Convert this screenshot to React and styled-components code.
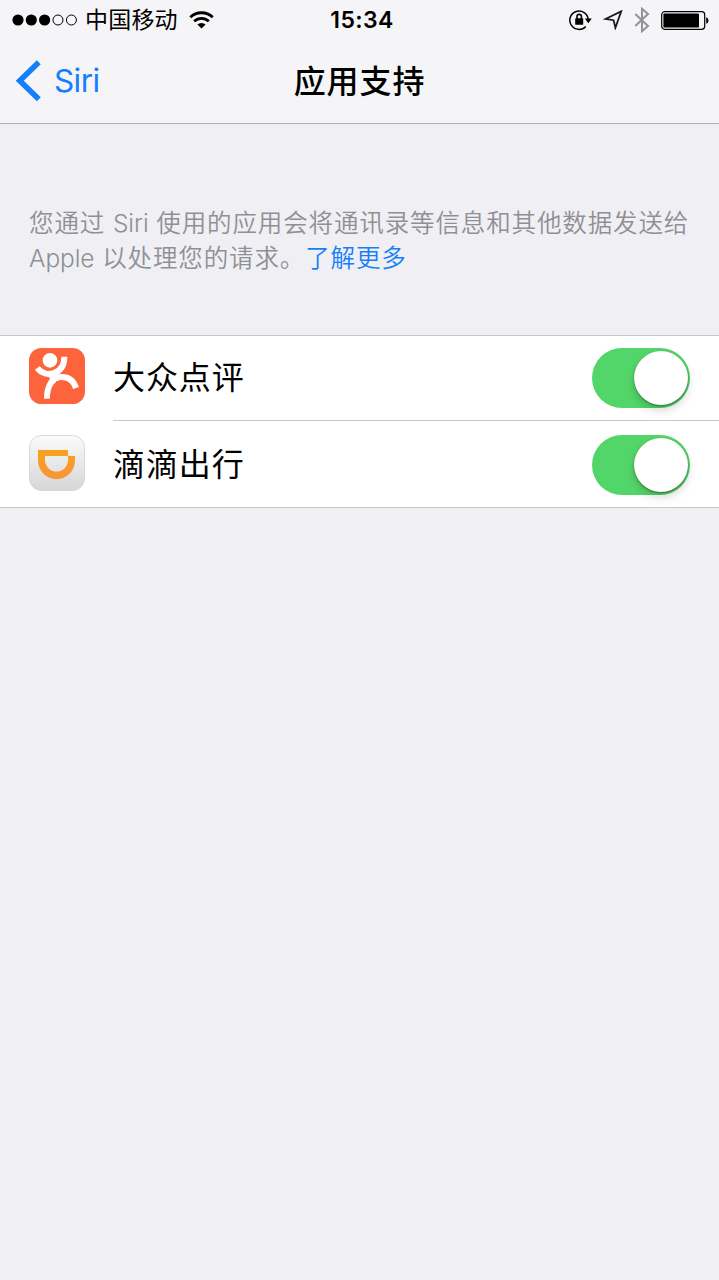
import React, { useState } from "react";
import styled, { createGlobalStyle } from "styled-components";

const GlobalStyle = createGlobalStyle`
  * {
    box-sizing: border-box;
  }
  body {
    margin: 0;
    background-color: #efeff4;
    font-family: Inter, "Noto Sans CJK SC", sans-serif;
    color: #000;
  }
`;

const Screen = styled.div`
  display: flex;
  flex-direction: column;
  width: 719px;
  height: 1280px;
  overflow: hidden;
  background-color: #efeff4;
`;

const Header = styled.header`
  height: 124px;
  background-color: #f5f5f8;
  border-bottom: 1px solid #aeaeb3;
`;

const StatusBar = styled.div`
  display: grid;
  grid-template-columns: 1fr auto 1fr;
  align-items: center;
  height: 40px;
  padding: 0 10px 0 12px;
`;

const StatusGroup = styled.div`
  display: flex;
  align-items: center;
  gap: ${({ $gap }) => $gap || 0}px;
  justify-content: ${({ $end }) => ($end ? "flex-end" : "flex-start")};
`;

const Carrier = styled.span`
  margin: 0 11px 0 7px;
  font-size: 23px;
  line-height: 40px;
  letter-spacing: 0.2px;
`;

const Clock = styled.span`
  padding-left: 3px;
  font-size: 23px;
  font-weight: 600;
  line-height: 40px;
  letter-spacing: 0.4px;
`;

const NavBar = styled.nav`
  display: grid;
  grid-template-columns: 1fr auto 1fr;
  align-items: center;
  height: 83px;
  padding: 0 16px;
`;

const BackButton = styled.button`
  display: flex;
  align-items: center;
  gap: 12px;
  margin-bottom: 2px;
  padding: 0;
  border: none;
  background: none;
  color: #157efb;
  font-family: inherit;
  font-size: 31.5px;
  line-height: 40px;
  letter-spacing: -0.6px;
  cursor: pointer;
`;

const Title = styled.h1`
  margin: 0;
  font-size: 32px;
  font-weight: 500;
  line-height: 40px;
  letter-spacing: 0.9px;
`;

const Note = styled.p`
  margin: 0;
  padding: 82px 20px 0 29px;
  height: 211px;
  font-size: 24.5px;
  font-weight: 350;
  line-height: 35px;
  letter-spacing: 0.88px;
  color: #8f8f95;
  white-space: nowrap;
`;

const Latin = styled.span`
  letter-spacing: -0.1px;
`;

const Link = styled.a`
  color: #157efb;
`;

const List = styled.div`
  border-top: 1px solid #c8c7cc;
  border-bottom: 1px solid #c8c7cc;
  background-color: #fff;
`;

const Row = styled.div`
  display: flex;
  align-items: stretch;
  gap: 28px;
  height: ${({ $last }) => ($last ? 86 : 85)}px;
  padding-left: 29px;
  & > svg {
    margin-top: ${({ $last }) => ($last ? 14 : 12)}px;
    flex-shrink: 0;
  }
`;

const RowBody = styled.div`
  display: flex;
  flex: 1;
  align-items: center;
  justify-content: space-between;
  padding-top: ${({ $last }) => ($last ? 2 : 0)}px;
  padding-right: 29px;
  border-bottom: ${({ $last }) => ($last ? "none" : "1px solid #c8c7cc")};
`;

const AppName = styled.span`
  font-size: 32px;
  line-height: 40px;
  letter-spacing: 0.9px;
`;

const Track = styled.button`
  display: flex;
  align-items: center;
  justify-content: ${({ $on }) => ($on ? "flex-end" : "flex-start")};
  width: 98px;
  height: 60px;
  padding: 0 2px;
  border: none;
  border-radius: 30px;
  background-color: ${({ $on }) => ($on ? "#53d669" : "#e5e5e5")};
  cursor: pointer;
`;

const Knob = styled.span`
  width: 54px;
  height: 54px;
  border-radius: 50%;
  background-color: #fff;
  box-shadow: 0 1px 2px rgba(0, 0, 0, 0.38), 0 5px 10px rgba(0, 0, 0, 0.17);
`;

const SignalDots = () => (
  <svg width="66" height="12" viewBox="0 0 66 12">
    <circle cx="6" cy="6" r="5.6" />
    <circle cx="19.3" cy="6" r="5.6" />
    <circle cx="32.6" cy="6" r="5.6" />
    <g fill="none" stroke="#000" strokeWidth="1">
      <circle cx="46" cy="6" r="5" />
      <circle cx="59.4" cy="6" r="5" />
    </g>
  </svg>
);

const WifiIcon = () => (
  <svg width="25" height="18" viewBox="0 0 25 18">
    <g fill="none" stroke="#000" strokeWidth="2.8">
      <path d="M1.3 6.3a16 16 0 0 1 22.4 0" />
      <path d="M5.2 10.3a10.4 10.4 0 0 1 14.6 0" />
    </g>
    <path d="M8.4 13.6a5.8 5.8 0 0 1 8.2 0L12.5 17.6z" />
  </svg>
);

const RotationLockIcon = () => (
  <svg width="24" height="22" viewBox="0 0 24 22">
    <path
      d="M17.8 17.4a9.2 9.2 0 1 1 2.4-6.8"
      fill="none"
      stroke="#000"
      strokeWidth="1.5"
    />
    <path d="M16.8 9.6h7l-3.5 4.6z" />
    <rect x="7.2" y="9.2" width="8" height="6.6" rx="0.6" />
    <path
      d="M9 10V7.6a2.2 2.2 0 0 1 4.4 0V10"
      fill="none"
      stroke="#000"
      strokeWidth="1.6"
    />
  </svg>
);

const LocationIcon = () => (
  <svg width="20" height="20" viewBox="0 0 20 20">
    <path
      d="M18.2 1.4L2.4 9l8.2 1.2 1.8 7.6z"
      fill="none"
      stroke="#1c1c1e"
      strokeWidth="1.8"
    />
  </svg>
);

const BluetoothIcon = () => (
  <svg width="16" height="26" viewBox="0 0 16 26">
    <path
      d="M1.3 7L14 19l-6 5.2V1.8L14 7 1.3 19"
      fill="none"
      stroke="#929295"
      strokeWidth="2"
    />
  </svg>
);

const BatteryIcon = () => (
  <svg width="48" height="19" viewBox="0 0 48 19">
    <rect
      x="0.7"
      y="0.7"
      width="43"
      height="17.6"
      rx="3"
      fill="none"
      stroke="#000"
      strokeWidth="1.2"
    />
    <rect x="2.4" y="2.4" width="35.6" height="14.2" rx="1.2" />
    <path d="M45.2 6.3c3 .8 3 5.6 0 6.4z" />
  </svg>
);

const ChevronIcon = () => (
  <svg width="26" height="42" viewBox="0 0 26 42">
    <path
      d="M22.8 2.3L3.8 20.8l19 18.5"
      fill="none"
      stroke="#157efb"
      strokeWidth="5.6"
    />
  </svg>
);

const DianpingIcon = () => (
  <svg width="56" height="56" viewBox="0 0 168 168">
    <rect width="168" height="168" rx="37" fill="#fd643b" />
    <circle cx="63" cy="37" r="22" fill="#fff" />
    <g fill="none" stroke="#fff" strokeWidth="18">
      <path d="M25 60C40 80 62 80 75 75 96 68 106 50 106 26" />
      <path d="M54 152C53 116 70 88 95 87 120 86 134 98 141 120" />
      <path d="M57 76C69 80 74 86 70 104" />
    </g>
  </svg>
);

const DidiIcon = () => (
  <svg width="56" height="56" viewBox="0 0 168 168">
    <defs>
      <linearGradient id="didiTile" x1="0" y1="0" x2="0" y2="1">
        <stop offset="0" stopColor="#fbfbfb" />
        <stop offset="1" stopColor="#d6d6d6" />
      </linearGradient>
      <linearGradient id="didiMark" x1="0" y1="0" x2="0" y2="1">
        <stop offset="0" stopColor="#f8a21f" />
        <stop offset="1" stopColor="#f7943a" />
      </linearGradient>
    </defs>
    <rect
      x="1.5"
      y="1.5"
      width="165"
      height="165"
      rx="36"
      fill="url(#didiTile)"
      stroke="#d2d2d2"
      strokeWidth="2.5"
    />
    <path
      fill="url(#didiMark)"
      fillRule="evenodd"
      d="M27 45h90v18h21v14a55.5 55.5 0 0 1-111 0zM48 63v12a34.5 34.5 0 0 0 69 0V63z"
    />
  </svg>
);

const apps = [
  { id: "dianping", name: "大众点评", Icon: DianpingIcon },
  { id: "didi", name: "滴滴出行", Icon: DidiIcon },
];

const App = () => {
  const [enabled, setEnabled] = useState({ dianping: true, didi: true });

  const toggle = (id) => setEnabled((prev) => ({ ...prev, [id]: !prev[id] }));

  return (
    <Screen>
      <GlobalStyle />
      <Header>
        <StatusBar>
          <StatusGroup>
            <SignalDots />
            <Carrier>中国移动</Carrier>
            <WifiIcon />
          </StatusGroup>
          <Clock>15:34</Clock>
          <StatusGroup $end $gap={11}>
            <RotationLockIcon />
            <LocationIcon />
            <BluetoothIcon />
            <BatteryIcon />
          </StatusGroup>
        </StatusBar>
        <NavBar>
          <BackButton>
            <ChevronIcon />
            Siri
          </BackButton>
          <Title>应用支持</Title>
        </NavBar>
      </Header>
      <Note>
        您通过 <Latin>Siri</Latin> 使用的应用会将通讯录等信息和其他数据发送给
        <br />
        <Latin>Apple</Latin> 以处理您的请求。<Link>了解更多</Link>
      </Note>
      <List>
        {apps.map(({ id, name, Icon }, index) => {
          const last = index === apps.length - 1;
          return (
            <Row key={id} $last={last}>
              <Icon />
              <RowBody $last={last}>
                <AppName>{name}</AppName>
                <Track $on={enabled[id]} onClick={() => toggle(id)}>
                  <Knob />
                </Track>
              </RowBody>
            </Row>
          );
        })}
      </List>
    </Screen>
  );
};

export default App;
